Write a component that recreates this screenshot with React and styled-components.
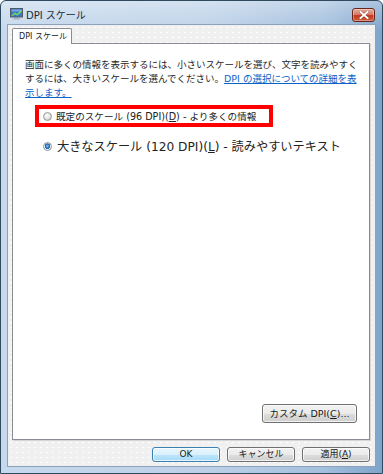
import React from "react";
import styled, { createGlobalStyle } from "styled-components";

const Global = createGlobalStyle`
  html, body { margin: 0; padding: 0; background: #ffffff; }
  body {
    width: 383px;
    height: 474px;
    overflow: hidden;
    font-family: "DejaVu Sans", "Noto Sans CJK JP", sans-serif;
  }
  * { box-sizing: border-box; }
`;

const Window = styled.div`
  width: 383px;
  height: 474px;
  border: 1px solid #2f4a5e;
  border-radius: 6px 6px 0 0;
  background:
    linear-gradient(to bottom, rgba(255,255,255,0.35), rgba(255,255,255,0) 30px),
    linear-gradient(to right, #c6d9ed 0%, #bcd1e8 55%, #a3bfdd 85%, #7fa4cc 100%);
  display: flex;
  flex-direction: column;
  overflow: hidden;
`;

const TitleBar = styled.div`
  height: 23px;
  flex: none;
  display: flex;
  align-items: center;
  padding: 3px 7px 0 9px;
  gap: 3px;
`;

const TitleText = styled.span`
  font-size: 10px;
  color: #1c2a36;
  white-space: nowrap;
`;

const CloseButton = styled.div`
  margin-left: auto;
  margin-top: 1px;
  width: 23px;
  height: 14px;
  border: 1px solid #6b2418;
  border-radius: 3px;
  background: linear-gradient(to bottom, #e8aa9c 0%, #d77c69 45%, #c3371d 55%, #d2603f 100%);
  display: flex;
  align-items: center;
  justify-content: center;
  box-shadow: inset 0 0 0 1px rgba(255,255,255,0.35);
`;

const Client = styled.div`
  flex: 1;
  margin: 0 6px 6px 6px;
  border: 1px solid #8ca2ba;
  background-color: #f0f0f0;
  background-image: radial-gradient(rgba(255,255,255,0.9) 0.6px, transparent 1px);
  background-size: 6px 5px;
  display: flex;
  flex-direction: column;
  padding: 3px 5px 4px 4px;
`;

const TabStrip = styled.div`
  display: flex;
  flex: none;
  position: relative;
  z-index: 1;
  margin-bottom: -1px;
`;

const Tab = styled.div`
  width: 60px;
  height: 16px;
  border: 1px solid #898c95;
  border-bottom: none;
  border-radius: 2px 2px 0 0;
  background: #ffffff;
  font-size: 8px;
  color: #222;
  display: flex;
  align-items: center;
  padding-left: 6px;
  line-height: 1;
  white-space: nowrap;
`;

const Panel = styled.div`
  flex: 1;
  background: #ffffff;
  border: 1px solid #898c95;
  box-shadow: 1px 1px 0 #d6d6d6;
  display: flex;
  flex-direction: column;
  padding: 14px 8px 16px 12px;
`;

const Description = styled.p`
  margin: 0;
  font-size: 9.5px;
  line-height: 14px;
  color: #262626;
`;

const Link = styled.span`
  color: #0a62c9;
  text-decoration: underline;
  text-underline-offset: 1px;
`;

const Options = styled.div`
  display: flex;
  flex-direction: column;
  margin: 9px 0 0 18px;
  gap: 14px;
`;

const Option = styled.div`
  position: relative;
  display: flex;
  align-items: center;
  height: ${(p) => (p.$large ? "18px" : "14px")};
  gap: ${(p) => (p.$large ? "5px" : "4px")};
  font-size: ${(p) => (p.$large ? "12.2px" : "9.6px")};
  color: #222;
  white-space: nowrap;
`;

const Highlight = styled.span`
  position: absolute;
  left: -8px;
  top: -4px;
  width: 238px;
  height: 22px;
  border: 4px solid #ff0000;
  pointer-events: none;
`;

const Radio = styled.span`
  width: 9px;
  height: 9px;
  border-radius: 50%;
  flex: none;
  border: 1px solid ${(p) => (p.$checked ? "#8a98a8" : "#9a9a9a")};
  background: ${(p) =>
    p.$checked
      ? "radial-gradient(circle at 50% 45%, #9fcdf3 0, #3a82c8 1.5px, #245f9e 2.5px, #edf1f5 3px)"
      : "radial-gradient(circle at 40% 35%, #ffffff 0, #e6e6e6 3px, #cfcfcf 4.5px)"};
`;

const Mn = styled.span`
  text-decoration: underline;
  text-underline-offset: 1px;
`;

const Spacer = styled.div`
  flex: 1;
`;

const PanelFooter = styled.div`
  display: flex;
  justify-content: flex-end;
  padding-right: 4px;
`;

const Button = styled.div`
  width: ${(p) => p.$w || 68}px;
  height: ${(p) => p.$h || 15}px;
  border: 1px solid ${(p) => (p.$default ? "#3c7fb1" : "#707070")};
  border-radius: 3px;
  background: ${(p) =>
    p.$default
      ? "linear-gradient(to bottom, #eaf6fd 0%, #d9f0fc 50%, #bee6fd 50%, #a7d9f5 100%)"
      : "linear-gradient(to bottom, #f2f2f2 0%, #ebebeb 50%, #dddddd 50%, #cfcfcf 100%)"};
  box-shadow: inset 0 0 0 1px rgba(255,255,255,0.7);
  display: flex;
  align-items: center;
  justify-content: center;
  font-size: ${(p) => p.$fs || 9}px;
  color: #1a1a1a;
  line-height: 1;
  white-space: nowrap;
`;

const ButtonRow = styled.div`
  flex: none;
  display: flex;
  justify-content: flex-end;
  gap: 7px;
  margin-top: 7px;
`;

const AppIcon = () => (
  <svg width="13" height="12" viewBox="0 0 13 12">
    <rect x="0.5" y="0.5" width="12" height="8.5" fill="#3a78c8" stroke="#4d5a66" />
    <path d="M1.5 7.5 L5 4.5 L7 6 L11.5 1.8 L11.5 4 L7 7.6 L5 6.2 L1.5 8.5 Z" fill="#7fe05a" />
    <rect x="1.5" y="1.5" width="10" height="2" fill="#9cc6f0" opacity="0.6" />
    <rect x="4" y="9.5" width="5" height="1.2" fill="#8a949c" />
    <rect x="2.5" y="10.6" width="8" height="1.2" fill="#b8c0c6" />
  </svg>
);

const CloseX = () => (
  <svg width="10" height="8" viewBox="0 0 10 8">
    <path d="M1.5 1 L8.5 7 M8.5 1 L1.5 7" stroke="#5a1a10" strokeWidth="3" strokeLinecap="square" opacity="0.5" />
    <path d="M1.5 1 L8.5 7 M8.5 1 L1.5 7" stroke="#ffffff" strokeWidth="2" strokeLinecap="square" />
  </svg>
);

export default function App() {
  return (
    <>
      <Global />
      <Window>
        <TitleBar>
          <AppIcon />
          <TitleText>DPI スケール</TitleText>
          <CloseButton>
            <CloseX />
          </CloseButton>
        </TitleBar>
        <Client>
          <TabStrip>
            <Tab>DPI スケール</Tab>
          </TabStrip>
          <Panel>
            <Description>
              画面に多くの情報を表示するには、小さいスケールを選び、文字を読みやすくするには、大きいスケールを選んでください。
              <Link>DPI の選択についての詳細を表</Link>
              <br />
              <Link>示します。</Link>
            </Description>
            <Options>
              <Option>
                <Highlight />
                <Radio />
                <span>
                  既定のスケール (96 DPI)(<Mn>D</Mn>) - より多くの情報
                </span>
              </Option>
              <Option $large>
                <Radio $checked />
                <span>
                  大きなスケール (120 DPI)(<Mn>L</Mn>) - 読みやすいテキスト
                </span>
              </Option>
            </Options>
            <Spacer />
            <PanelFooter>
              <Button $w={95} $h={19} $fs={9.5}>
                カスタム DPI(<Mn>C</Mn>)...
              </Button>
            </PanelFooter>
          </Panel>
          <ButtonRow>
            <Button $default>OK</Button>
            <Button>キャンセル</Button>
            <Button>
              適用(<Mn>A</Mn>)
            </Button>
          </ButtonRow>
        </Client>
      </Window>
    </>
  );
}
